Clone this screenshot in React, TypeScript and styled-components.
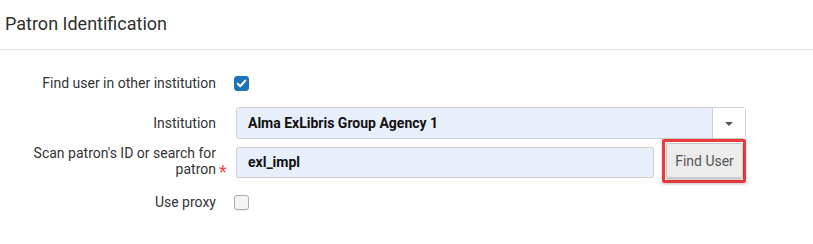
import React from "react";
import styled, { createGlobalStyle } from "styled-components";

const Global = createGlobalStyle`
  html, body { margin: 0; padding: 0; background: #fff; }
  body { font-family: Roboto, "Liberation Sans", Arial, sans-serif; color: #333; }
`;

const Page = styled.div`
  width: 813px;
  height: 244px;
  background: #fff;
  overflow: hidden;
`;

const Header = styled.div`
  height: 50px;
  border-bottom: 1px solid #e2e2e2;
  display: flex;
  align-items: center;
  padding-left: 5px;
  padding-bottom: 3px;
  box-sizing: border-box;
`;

const Title = styled.h2`
  margin: 0;
  font-size: 18px;
  font-weight: 400;
  color: #2f2f2f;
`;

const Form = styled.div`
  display: flex;
  flex-direction: column;
  padding-top: 19px;
`;

const Row = styled.div<{ $h: number; $mt?: number }>`
  display: grid;
  grid-template-columns: 216px 20px 510px;
  align-items: center;
  min-height: ${(p) => p.$h}px;
  margin-top: ${(p) => p.$mt ?? 0}px;
`;

const Label = styled.div`
  text-align: right;
  font-size: 14px;
  line-height: 16px;
  color: #333;
`;

const Marker = styled.div`
  color: #e84a4f;
  font-size: 18px;
  align-self: end;
  padding-left: 3px;
  line-height: 16px;
  padding-bottom: 3px;
`;

const Control = styled.div`
  display: flex;
  align-items: center;
  gap: 8px;
`;

const Check = styled.span<{ $on?: boolean }>`
  width: 15px;
  height: 15px;
  box-sizing: border-box;
  border-radius: 3px;
  margin-left: -2px;
  display: inline-flex;
  align-items: center;
  justify-content: center;
  background: ${(p) => (p.$on ? "#1b75b6" : "#f4f4f4")};
  border: 1px solid ${(p) => (p.$on ? "#1b75b6" : "#adadad")};
  box-shadow: ${(p) => (p.$on ? "none" : "0 1px 1px rgba(0,0,0,0.08)")};
`;

const Select = styled.div`
  width: 510px;
  height: 32px;
  box-sizing: border-box;
  border: 1px solid #cfcfcf;
  border-radius: 3px;
  display: flex;
  overflow: hidden;
`;

const SelectValue = styled.div`
  flex: 1;
  background: #e8eefa;
  display: flex;
  align-items: center;
  padding-left: 11px;
  font-size: 14px;
  font-weight: 700;
  color: #111;
`;

const Caret = styled.div`
  width: 32px;
  border-left: 1px solid #cfcfcf;
  background: #fff;
  display: flex;
  align-items: center;
  justify-content: center;
  &::after {
    content: "";
    border-left: 4px solid transparent;
    border-right: 4px solid transparent;
    border-top: 4px solid #555;
    margin-top: 1px;
  }
`;

const Input = styled.div`
  width: 418px;
  height: 31px;
  box-sizing: border-box;
  border: 1px solid #cfcfcf;
  border-radius: 2px;
  background: #e8eefa;
  display: flex;
  align-items: center;
  padding-left: 11px;
  font-size: 14px;
  font-weight: 700;
  color: #111;
  margin-top: 2px;
`;

const Highlight = styled.div`
  border: 3px solid #ec3b3f;
  border-radius: 2px;
  padding: 1px 0 2px 1px;
  width: 84px;
  height: 44px;
  box-sizing: border-box;
  box-shadow: 0 1px 3px rgba(0, 0, 0, 0.25);
`;

const Button = styled.button`
  width: 77px;
  height: 35px;
  box-sizing: border-box;
  border: 1px solid #c8c8c8;
  border-radius: 2px;
  background: #ececec;
  box-shadow: 0 2px 3px rgba(0, 0, 0, 0.25);
  font-family: Roboto, "Liberation Sans", Arial, sans-serif;
  font-size: 14px;
  color: #555;
  padding: 0;
`;

const CheckMark = () => (
  <svg width="11" height="11" viewBox="0 0 11 11">
    <path d="M1.8 5.8 L4.3 8.2 L9.2 2.6" fill="none" stroke="#fff" strokeWidth="2.1" strokeLinecap="round" strokeLinejoin="round" />
  </svg>
);

export default function App() {
  return (
    <Page>
      <Global />
      <Header>
        <Title>Patron Identification</Title>
      </Header>
      <Form>
        <Row $h={28}>
          <Label>Find user in other institution</Label>
          <Marker />
          <Control>
            <Check $on>
              <CheckMark />
            </Check>
          </Control>
        </Row>
        <Row $h={32} $mt={10}>
          <Label>Institution</Label>
          <Marker />
          <Control>
            <Select>
              <SelectValue>Alma ExLibris Group Agency 1</SelectValue>
              <Caret />
            </Select>
          </Control>
        </Row>
        <Row $h={44} $mt={0}>
          <Label>
            Scan patron's ID or search for
            <br />
            patron
          </Label>
          <Marker>*</Marker>
          <Control>
            <Input>exl_impl</Input>
            <Highlight>
              <Button>Find User</Button>
            </Highlight>
          </Control>
        </Row>
        <Row $h={28} $mt={5}>
          <Label>Use proxy</Label>
          <Marker />
          <Control>
            <Check />
          </Control>
        </Row>
      </Form>
    </Page>
  );
}
